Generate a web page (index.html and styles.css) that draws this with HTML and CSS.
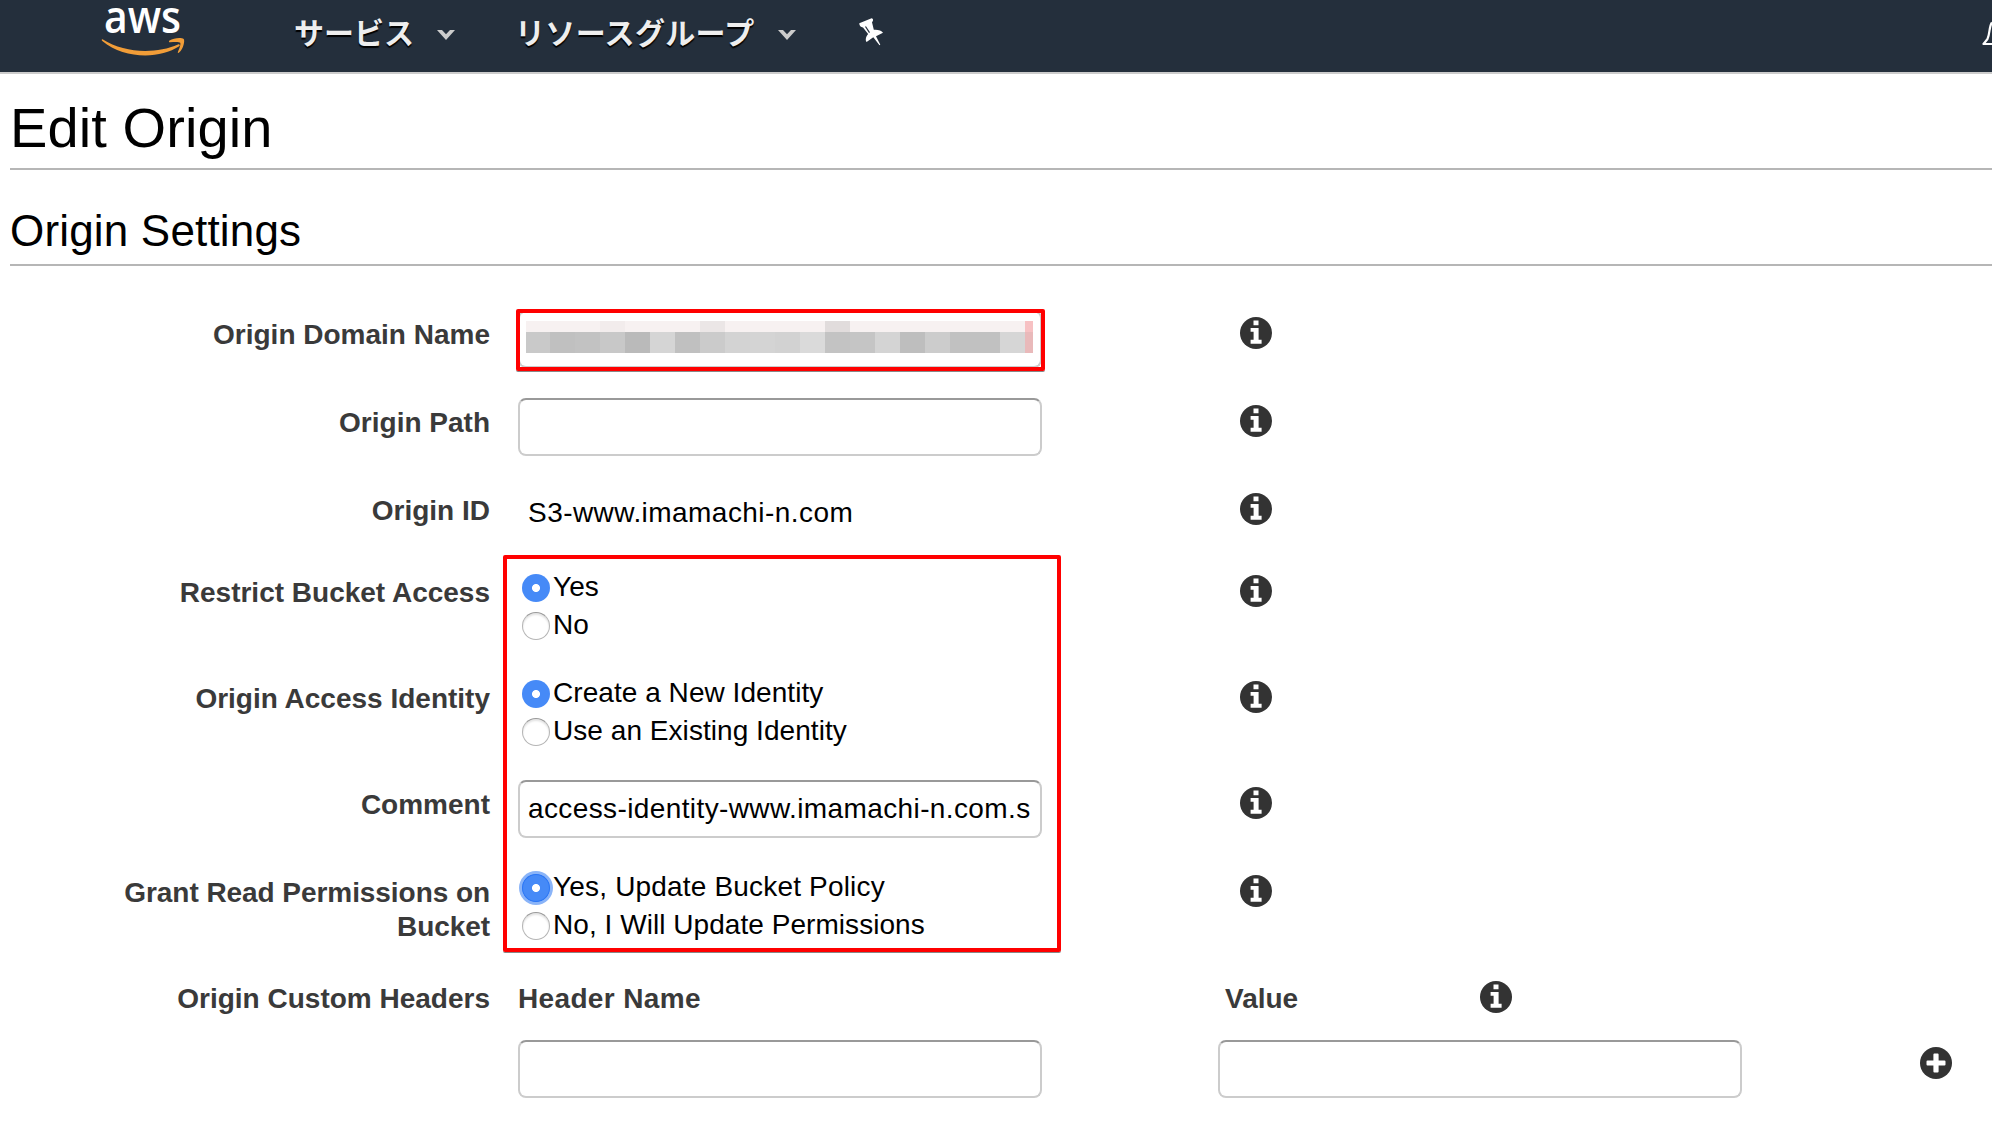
FILE: index.html
```html
<!DOCTYPE html>
<html lang="ja">
<head>
<meta charset="utf-8">
<title>Edit Origin</title>
<link rel="stylesheet" href="styles.css">
</head>
<body>
<svg class="defs" width="0" height="0">
  <symbol id="info" viewBox="0 0 32 32">
    <circle cx="16" cy="16" r="16" fill="#333"/>
    <path fill="#fff" d="M13.5 3.600h5v4.600h-5zM10.600 11h8v11.800h3v4H10.600v-4h3v-8h-3z"/>
  </symbol>
  <symbol id="plus" viewBox="0 0 32 32">
    <circle cx="16" cy="16" r="16" fill="#333"/>
    <path fill="#fff" d="M14.4 6.5h3.2a1 1 0 0 1 1 1v5.9h5.9a1 1 0 0 1 1 1v3.2a1 1 0 0 1-1 1h-5.9v5.9a1 1 0 0 1-1 1h-3.2a1 1 0 0 1-1-1v-5.9H7.5a1 1 0 0 1-1-1v-3.2a1 1 0 0 1 1-1h5.9V7.5a1 1 0 0 1 1-1z"/>
  </symbol>
  <symbol id="chevron" viewBox="0 0 18 10">
    <path fill="#ccc" d="M0 0h5l4 4.2L13 0h5L9 10z"/>
  </symbol>
</svg>

<header class="topbar">
  <svg class="logo" width="84" height="60" viewBox="0 0 84 60">
    <text x="2" y="33" class="logo-text" textLength="77" lengthAdjust="spacingAndGlyphs">aws</text>
    <path fill="#f19d38" d="M.5 39.300C23 53.600 54 54 76 44.500c1.500-.6 2.500.8 1.200 1.800C57 59.500 22 59 .3 41c-.9-.8-.6-2 .2-1.700z"/>
    <path fill="#f19d38" d="M67.500 40.500c4-2.800 12-3.300 14.200-1.600 1.300 1.400 0 9.500-4.600 13.700-.8.7-1.600.3-1.200-.6 1.300-3 3.200-8 2.300-9.300-1-1.200-6.600-.8-10-.4-1.300.1-1.700-1-.7-1.800z"/>
  </svg>
  <a class="menu menu-services">サービス<svg width="18" height="10"><use href="#chevron"/></svg></a>
  <a class="menu menu-groups">リソースグループ<svg width="18" height="10"><use href="#chevron"/></svg></a>
  <svg class="pin" width="25" height="28" viewBox="0 0 25 28">
    <path fill="#fff" d="M.3 5.300 12.600.3c1.800.2 2 2.700.4 3.900l1.800 7.600c3.800-.3 8 .5 9.200 3L17 18.200l4.300 8.500-.8.6-6.200-8L7.600 24c-1.600-1.800-.6-5.500 1.500-7.900L4 9.500C1.900 9.500.1 7.500.3 5.300z"/>
    <path stroke="#242f3c" stroke-width="1.200" fill="none" d="m6.500 8.500 4 6.200"/>
  </svg>
  <svg class="bell" width="10" height="30" viewBox="0 0 10 30">
    <path d="M10 2.500C7 6 8 14 5.500 19L1.500 24H12" fill="none" stroke="#fff" stroke-width="2.200" stroke-linejoin="round"/>
  </svg>
</header>

<main>
  <h1>Edit Origin</h1>
  <h2>Origin Settings</h2>

  <form class="form">
    <div class="row">
      <label>Origin Domain Name</label>
      <div class="marked-field">
        <input type="text">
        <svg class="redacted" width="507" height="32" viewBox="526 321 507 32" shape-rendering="crispEdges">
          <path fill="#f7f1f1" d="M526 321h499v11H526z"/>
          <path fill="#f2ecec" d="M600 321h25v11h-25z"/>
          <path fill="#ebe6e6" d="M700 321h25v11h-25z"/>
          <path fill="#e1dcdc" d="M825 321h25v11h-25z"/>
          <path fill="#f7c1c3" d="M1025 321h8v11h-8z"/>
          <path fill="#c9c9c9" d="M526 332h24v21h-24z"/>
          <path fill="#c0c0c0" d="M550 332h25v21h-25z"/>
          <path fill="#c2c2c2" d="M575 332h25v21h-25z"/>
          <path fill="#c8c8c8" d="M600 332h25v21h-25z"/>
          <path fill="#bababa" d="M625 332h25v21h-25z"/>
          <path fill="#d5d5d5" d="M650 332h25v21h-25z"/>
          <path fill="#c0c0c0" d="M675 332h25v21h-25z"/>
          <path fill="#cbcbcb" d="M700 332h25v21h-25z"/>
          <path fill="#d3d3d3" d="M725 332h25v21h-25z"/>
          <path fill="#d4d4d4" d="M750 332h25v21h-25z"/>
          <path fill="#d2d2d2" d="M775 332h25v21h-25z"/>
          <path fill="#dadada" d="M800 332h25v21h-25z"/>
          <path fill="#c3c3c3" d="M825 332h25v21h-25z"/>
          <path fill="#c5c5c5" d="M850 332h25v21h-25z"/>
          <path fill="#d4d4d4" d="M875 332h25v21h-25z"/>
          <path fill="#bebebe" d="M900 332h25v21h-25z"/>
          <path fill="#cccccc" d="M925 332h25v21h-25z"/>
          <path fill="#c1c1c1" d="M950 332h50v21h-50z"/>
          <path fill="#d6d6d6" d="M1000 332h25v21h-25z"/>
          <path fill="#e9b9ba" d="M1025 332h8v21h-8z"/>
        </svg>
      </div>
      <svg class="icon"><use href="#info"/></svg>
    </div>

    <div class="row">
      <label>Origin Path</label>
      <div class="field"><input type="text"></div>
      <svg class="icon"><use href="#info"/></svg>
    </div>

    <div class="row row-id">
      <label>Origin ID</label>
      <div class="value">S3-www.imamachi-n.com</div>
      <svg class="icon"><use href="#info"/></svg>
    </div>

    <section class="marked-group">
      <div class="row row-tall">
        <label>Restrict Bucket Access</label>
        <div class="radios">
          <div class="radio"><i class="dot on"></i>Yes</div>
          <div class="radio"><i class="dot"></i>No</div>
        </div>
        <svg class="icon"><use href="#info"/></svg>
      </div>

      <div class="row row-tall">
        <label>Origin Access Identity</label>
        <div class="radios">
          <div class="radio"><i class="dot on"></i>Create a New Identity</div>
          <div class="radio"><i class="dot"></i>Use an Existing Identity</div>
        </div>
        <svg class="icon"><use href="#info"/></svg>
      </div>

      <div class="row">
        <label>Comment</label>
        <div class="field"><input type="text" value="access-identity-www.imamachi-n.com.s"></div>
        <svg class="icon"><use href="#info"/></svg>
      </div>

      <div class="row row-tall">
        <label class="tight">Grant Read Permissions on Bucket</label>
        <div class="radios">
          <div class="radio radio-wide"><i class="dot on focus"></i>Yes, Update Bucket Policy</div>
          <div class="radio"><i class="dot"></i>No, I Will Update Permissions</div>
        </div>
        <svg class="icon"><use href="#info"/></svg>
      </div>
    </section>

    <div class="headers-row">
      <label>Origin Custom Headers</label>
      <div class="column column-name">
        <span class="column-title">Header Name</span>
        <input type="text">
      </div>
      <div class="column">
        <span class="column-title column-title-value">Value <svg class="icon"><use href="#info"/></svg></span>
        <input type="text">
      </div>
      <svg class="icon add"><use href="#plus"/></svg>
    </div>
  </form>
</main>
</body>
</html>
```
FILE: styles.css
```css
*, ::before, ::after { box-sizing: border-box; }

body {
  margin: 0;
  height: 1132px;
  overflow: hidden;
  background: #fff;
  color: #000;
  font: 28px/34px "Liberation Sans", Arial, "Noto Sans CJK JP", sans-serif;
}

svg { display: block; }
.defs { position: absolute; }

/* Navigation bar */
.topbar {
  display: flex;
  height: 74px;
  background: #242f3c;
  border-bottom: 2px solid #ccc;
  padding-left: 102px;
}
.logo {
  flex: none;
  overflow: visible;
}
.logo-text {
  font: 600 46px "Open Sans", "Noto Sans", sans-serif;
  fill: #fff;
}
.menu {
  display: flex;
  align-items: center;
  height: 62px;
  color: #eee;
  font: 700 30px/62px "Noto Sans CJK JP", sans-serif;
  text-shadow: 0 2px 1px #000;
  white-space: nowrap;
}
.menu svg { margin: 8px 0 0 23px; }
.menu-services { margin-left: 108px; }
.menu-groups {
  margin-left: 60px;
  letter-spacing: 0.35px;
}
.pin { margin: 18px 0 0 63px; }
.bell { margin: 20px 0 0 auto; }

/* Headings */
main { padding-left: 10px; }
h1, h2 {
  margin: 0;
  font-weight: 400;
  border-bottom: 2px solid #b6b6b6;
}
h1 {
  height: 96px;
  font-size: 56px;
  line-height: 107px;
  letter-spacing: 0.1px;
}
h2 {
  height: 96px;
  font-size: 44px;
  line-height: 122px;
  letter-spacing: 0.18px;
}

/* Form rows */
.form { margin: 36px 0 0 -10px; }
.row {
  display: grid;
  grid-template-columns: 490px 694px 32px;
  column-gap: 28px;
  align-items: start;
  height: 88px;
}
.row-id { height: 82px; }
.row-tall { height: 106px; }

label {
  padding: 16px 0 0 110px;
  color: #3a3a3a;
  font-weight: 700;
  text-align: right;
}
.tight { letter-spacing: -0.06px; }
.icon {
  width: 32px;
  height: 32px;
  margin-top: 15px;
}
.field { padding-top: 8px; }
input {
  display: block;
  width: 524px;
  height: 58px;
  padding: 0 8px 1px;
  border: 2px solid #ccc;
  border-top-color: #999;
  border-radius: 8px;
  background: #fff;
  color: #000;
  font: inherit;
  letter-spacing: 0.39px;
}
.value {
  padding: 18px 10px 0;
  letter-spacing: 0.45px;
}

.radios { padding: 7px 0 0 4px; }
.radio {
  display: flex;
  gap: 3px;
  height: 38px;
  line-height: 40px;
  letter-spacing: 0.05px;
}
.radio-wide { letter-spacing: 0.18px; }
.dot {
  width: 28px;
  height: 28px;
  margin-top: 7px;
  border: 1px solid #b5b5b5;
  border-top-color: #999;
  border-radius: 50%;
  background: #fff;
  box-shadow: inset 0 2px 2px #e4e4e4;
}
.dot.on {
  border: 0;
  background: radial-gradient(circle, #fff 3.6px, #468af7 4.4px);
  box-shadow: none;
}
.dot.focus { box-shadow: 0 0 0 3px #8ab4f8, inset 0 0 0 1px #2c77f5; }

/* Red highlight frames */
.marked-field {
  position: relative;
  padding-top: 8px;
}
.marked-field::after,
.marked-group::after {
  content: "";
  position: absolute;
  border: 4px solid #f00;
  border-radius: 2px;
  box-shadow: 0 1px 0 #888;
}
.marked-field::after {
  left: -2px;
  top: 7px;
  width: 529px;
  height: 62px;
}
.redacted {
  position: absolute;
  left: 8px;
  top: 19px;
}
.marked-group { position: relative; }
.marked-group::after {
  left: 503px;
  top: -5px;
  width: 558px;
  height: 397px;
}

/* Custom headers */
.headers-row {
  display: grid;
  grid-template-columns: 490px 728px 702px 32px;
  align-items: start;
}
.column-name { margin-left: 28px; }
.column-title {
  display: block;
  height: 74px;
  padding-top: 16px;
  color: #3a3a3a;
  font-weight: 700;
}
.column-name .column-title { letter-spacing: 0.35px; }
.column-title-value {
  display: grid;
  grid-template-columns: 255px 32px;
  align-items: start;
  padding-left: 7px;
}
.column-title .icon { margin-top: -1px; }
.add { margin-top: 81px; }
```
